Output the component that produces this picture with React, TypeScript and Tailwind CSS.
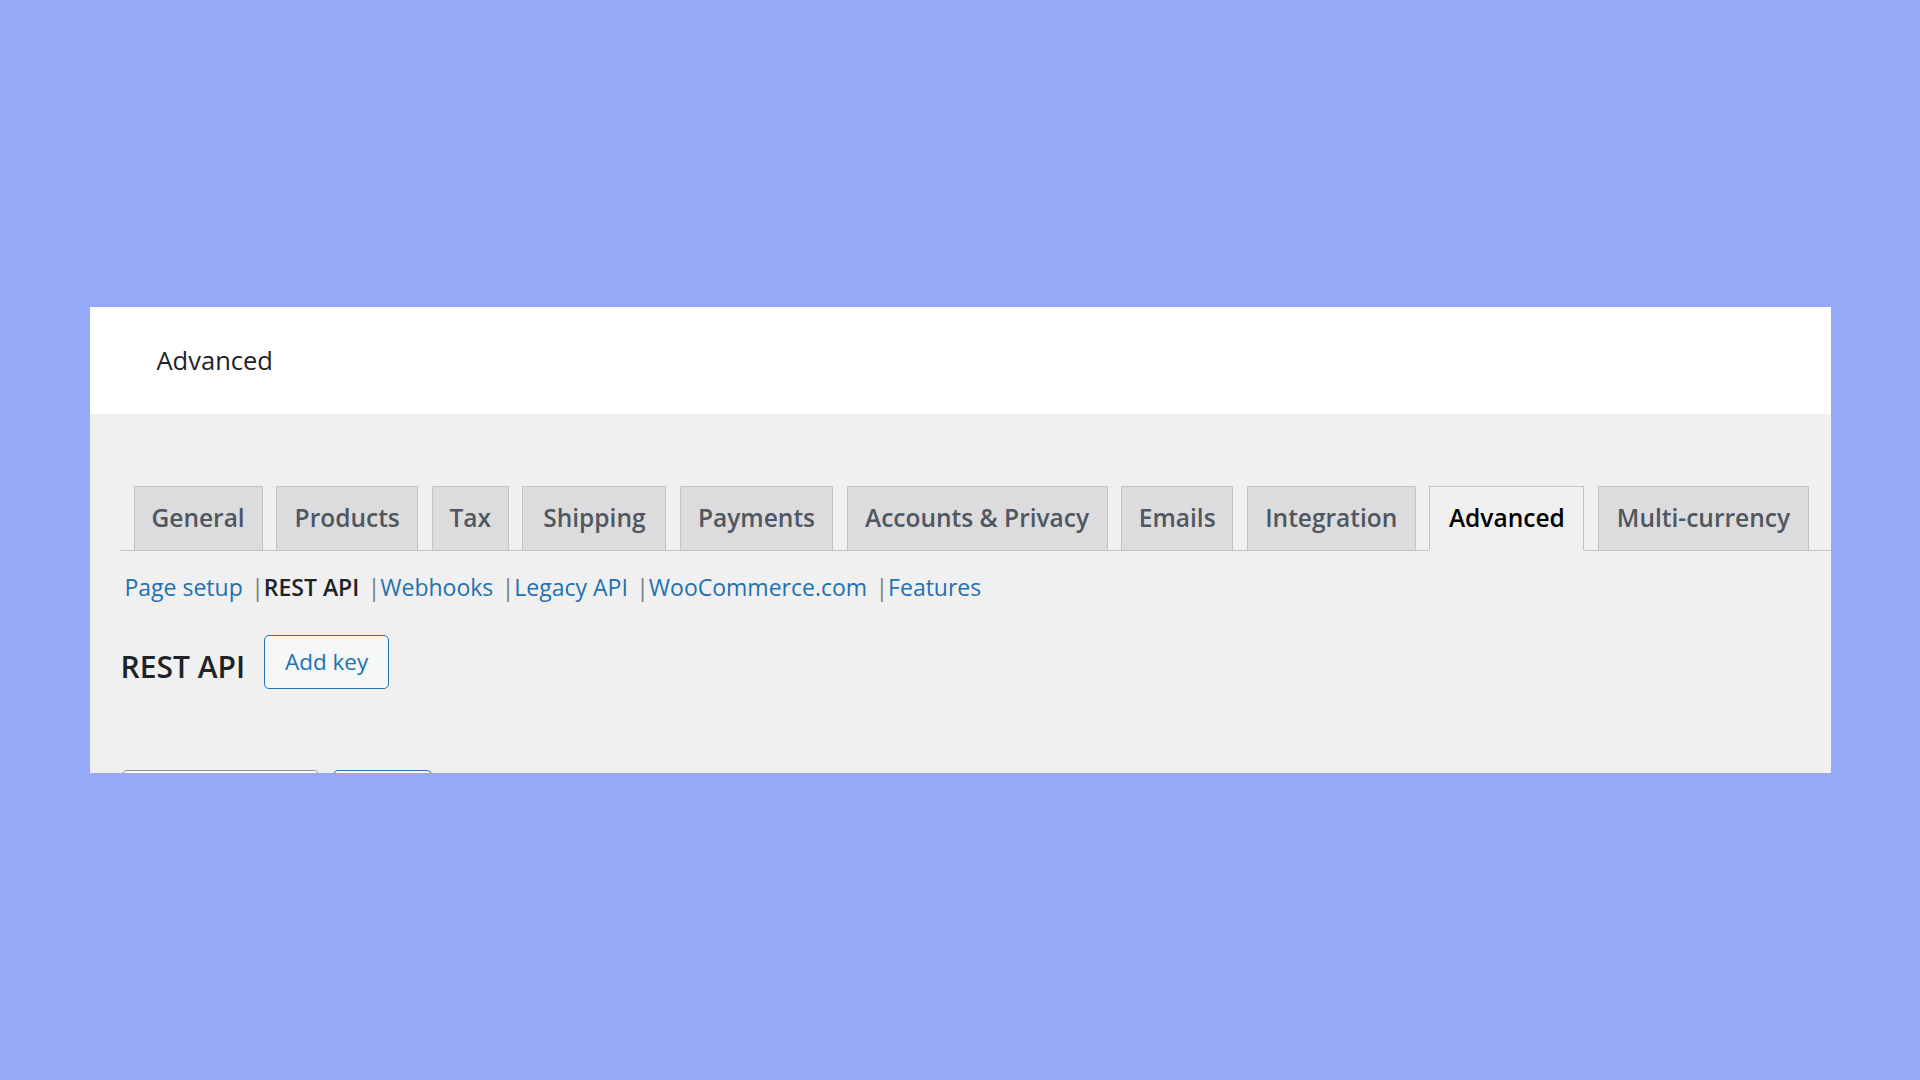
import React from "react";

const tabs = [
  { label: "General", w: "w-[129px]" },
  { label: "Products", w: "w-[142px]" },
  { label: "Tax", w: "w-[77px]" },
  { label: "Shipping", w: "w-[144px]" },
  { label: "Payments", w: "w-[153px]" },
  { label: "Accounts & Privacy", w: "w-[261px]" },
  { label: "Emails", w: "w-[112px]" },
  { label: "Integration", w: "w-[169px]" },
  { label: "Advanced", w: "w-[155px]" },
  { label: "Multi-currency", w: "w-[211px]" },
];

const sections = [
  { label: "Page setup", current: false },
  { label: "REST API", current: true },
  { label: "Webhooks", current: false },
  { label: "Legacy API", current: false },
  { label: "WooCommerce.com", current: false },
  { label: "Features", current: false },
];

export default function App() {
  return (
    <div className="flex h-screen w-full items-center justify-center bg-[#96a8f8] font-['Open_Sans',sans-serif]">
      <div className="flex h-[466px] w-[1741px] flex-col overflow-hidden bg-[#f0f0f1]">
        {/* top bar */}
        <div className="flex h-[107px] shrink-0 items-center bg-white pl-[67px]">
          <h1 className="text-[25.5px] font-medium text-[#1d2327]">Advanced</h1>
        </div>

        <div className="flex flex-col pl-[30px] pt-[72px]">
          {/* tabs */}
          <nav className="flex items-end border-b border-[#c3c4c7] pl-[0.5px]">
            {tabs.map((tab) => {
              const active = tab.label === "Advanced";
              return (
                <a
                  key={tab.label}
                  className={`${tab.w} ml-[13.6px] flex items-center justify-center whitespace-nowrap text-[24.5px] font-semibold ${
                    active
                      ? "-mb-px h-[65px] border border-[#c3c4c7] border-b-[#f0f0f1] bg-[#f0f0f1] text-black"
                      : "h-[64px] border border-b-0 border-[#c3c4c7] bg-[#dcdcde] text-[#50575e]"
                  }`}
                >
                  {tab.label}
                </a>
              );
            })}
          </nav>

          {/* sub sections */}
          <ul className="mt-[18px] flex h-[36px] items-center pl-[5px] text-[23px] leading-[36px]">
            {sections.map((s, i) => (
              <li key={s.label} className="flex items-center">
                {i > 0 && (
                  <span className="ml-[8.5px] mr-[6.5px] inline-block w-[6px] text-center text-[#787c82]">
                    |
                  </span>
                )}
                <a
                  className={
                    s.current
                      ? "font-semibold text-[#1d2327]"
                      : "text-[#2271b1]"
                  }
                >
                  {s.label}
                </a>
              </li>
            ))}
          </ul>

          {/* heading */}
          <div className="mt-[30px] flex items-center gap-[19px] pl-[1px]">
            <h2 className="mt-[10px] text-[30px] font-semibold leading-none text-[#1d2327]">
              REST API
            </h2>
            <button className="flex h-[54px] w-[125px] items-center justify-center rounded-[5px] border-[1.5px] border-[#2271b1] bg-[#f6f7f7] text-[22.5px] text-[#2271b1]">
              Add key
            </button>
          </div>

          {/* search row (cut off) */}
          <div className="mt-[81px] ml-[2px] flex gap-[14px]">
            <div className="h-[44px] w-[197px] rounded-[5px] border-[1.5px] border-[#8c8f94] bg-white" />
            <div className="h-[44px] w-[99px] rounded-[5px] border-[1.5px] border-[#2271b1] bg-[#f6f7f7]" />
          </div>
        </div>
      </div>
    </div>
  );
}
